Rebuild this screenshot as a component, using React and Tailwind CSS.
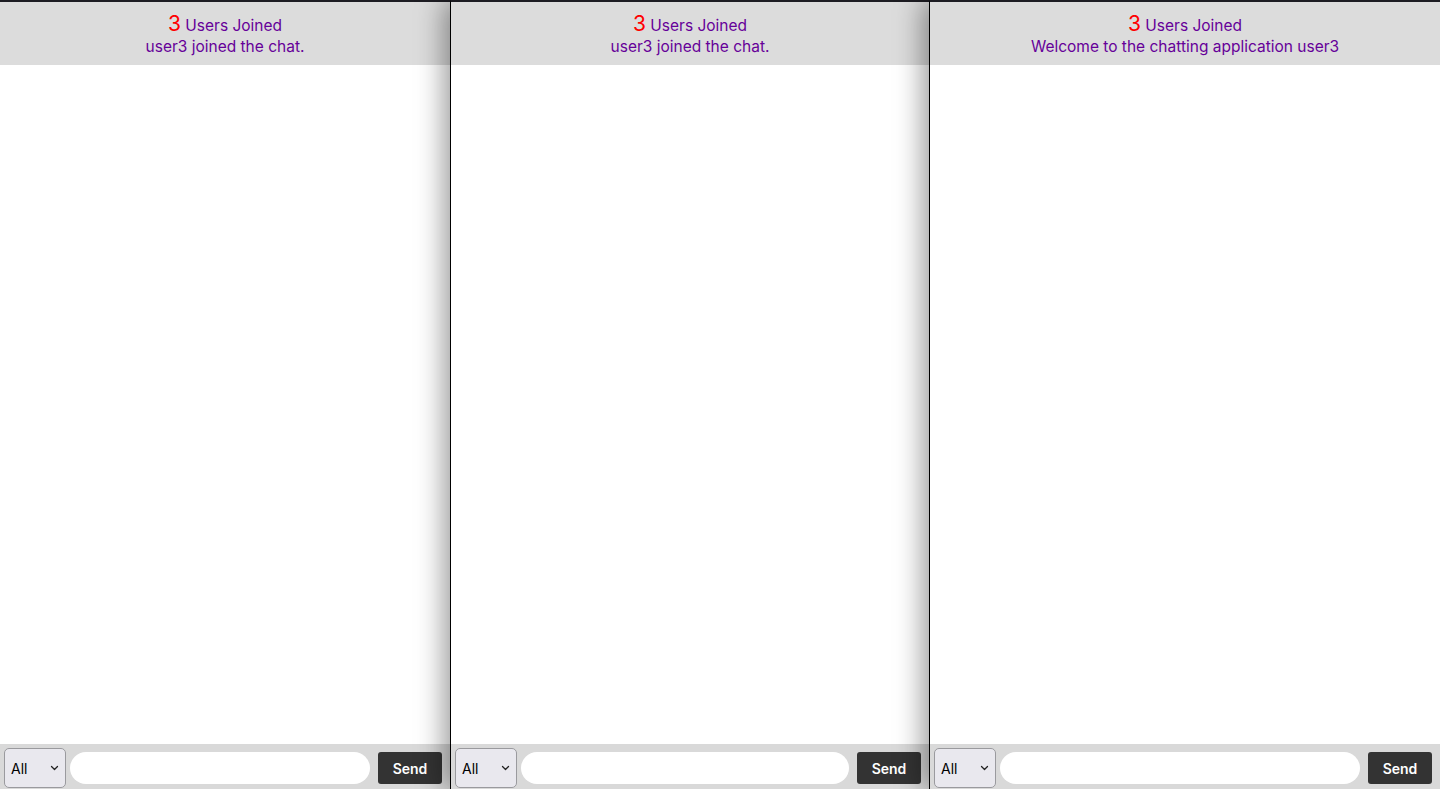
import React from "react";

const ChatWindow = ({ message, className = "" }) => {
  return (
    <div className={`relative flex h-full flex-col border-t-2 border-[#1d1c22] bg-white ${className}`}>
      <div className="flex h-[63px] shrink-0 flex-col items-center justify-center bg-[#dcdcdc] pt-[3px] text-[15.5px] leading-[21px] text-[#660099]">
        <p>
          <span className="text-[21px] text-[#ff0000]">3</span> Users Joined
        </p>
        <p>{message}</p>
      </div>
      <div className="flex-1" />
      <div className="flex h-[45px] shrink-0 items-center bg-[#d9d9d9] pt-[3px] pl-[4px] pr-[8px]">
        <div className="flex h-[40px] w-[62px] shrink-0 items-center justify-between rounded-[5px] border border-[#9a9a9e] bg-[#e9e8ee] pl-[6px] pr-[6px] text-[14px] text-black">
          <span>All</span>
          <svg width="9" height="6" viewBox="0 0 9 6" fill="none">
            <path d="M1.5 1.5 L4.5 4.5 L7.5 1.5" stroke="#222" strokeWidth="1.3" strokeLinecap="round" strokeLinejoin="round" />
          </svg>
        </div>
        <div className="ml-[4px] h-[32px] flex-1 rounded-full bg-white" />
        <button className="ml-[8px] h-[32px] w-[64px] shrink-0 rounded-[3px] bg-[#333333] text-[14px] font-semibold text-white">
          Send
        </button>
      </div>
    </div>
  );
};

export default function App() {
  return (
    <div
      className="flex h-[789px] w-[1440px] overflow-hidden bg-white"
      style={{ fontFamily: "Inter, 'Liberation Sans', sans-serif" }}>
      <ChatWindow message="user3 joined the chat." className="z-0 w-[450px] shrink-0" />
      <ChatWindow
        message="user3 joined the chat."
        className="z-10 w-[479px] shrink-0 border-l border-l-black shadow-[-6px_0_26px_rgba(0,0,0,0.4)]"
      />
      <ChatWindow
        message="Welcome to the chatting application user3"
        className="z-20 w-[511px] shrink-0 border-l border-l-black shadow-[-6px_0_26px_rgba(0,0,0,0.4)]"
      />
    </div>
  );
}
